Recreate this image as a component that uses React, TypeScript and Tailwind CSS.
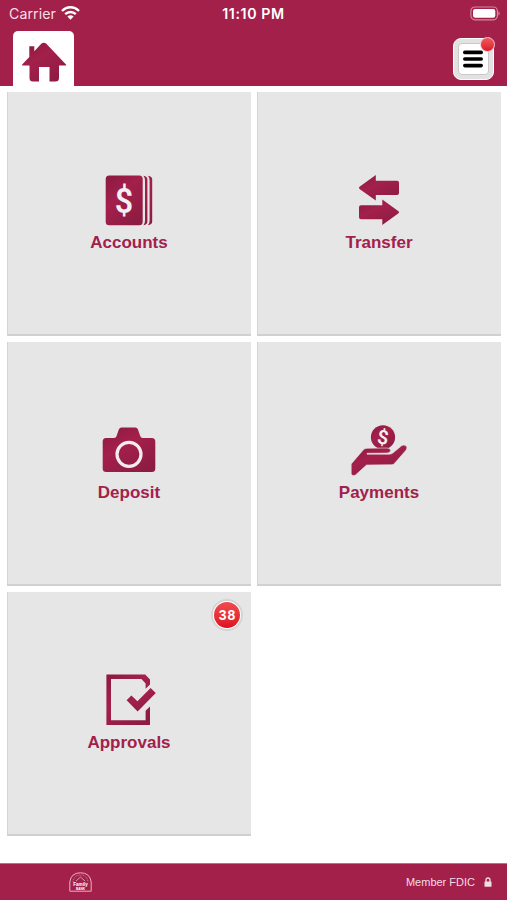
import React from 'react';

interface TileProps {
  label: string;
  badge?: number;
  children: React.ReactNode;
}

const Tile: React.FC<TileProps> = ({ label, badge, children }) => {
  return (
    <button className="relative flex h-[244px] flex-col items-center border-b-2 border-l border-b-[#d0d0d0] border-l-[#d4d4d4] bg-[#e6e6e6] pt-[79px] pr-px">
      <svg viewBox="0 0 60 60" className="h-[60px] w-[60px] shrink-0" fill="url(#brand)">
        {children}
      </svg>
      <span className="text-[17px] leading-6 font-bold text-[#a3204b]">{label}</span>
      {badge !== undefined && (
        <span className="absolute top-[7px] right-2 flex h-8 w-8 items-center justify-center rounded-full border-2 border-[#d4d4d4] bg-white">
          <span className="flex h-[26px] w-[26px] items-center justify-center rounded-full bg-linear-to-b from-[#ef4a50] to-[#de0a20] pl-px text-[14px] font-bold tracking-[1px] text-white">
            {badge}
          </span>
        </span>
      )}
    </button>
  );
};

const StatusBar: React.FC = () => {
  return (
    <div className="flex h-7 items-center justify-between pr-[6px] pl-[9px] font-['Inter',sans-serif] text-white">
      <div className="flex w-24 items-center gap-[5px]">
        <span className="text-[14.2px] tracking-[0.05px] text-[#f8dfe7]">Carrier</span>
        <svg viewBox="0 0 19 14" className="-mt-px h-[14px] w-[19px]" fill="none" stroke="white" strokeWidth="2.4">
          <path d="M1 5 C6 0 13 0 18 5" />
          <path d="M4.2 8.2 C7.2 5.3 11.8 5.3 14.8 8.2" />
          <path d="M6.4 10.6 Q9.5 7.9 12.6 10.6 L9.5 13.7Z" fill="white" stroke="none" />
        </svg>
      </div>
      <span className="-ml-[3px] text-[14.2px] font-semibold tracking-[0.6px]">11:10 PM</span>
      <div className="flex w-24 justify-end">
        <svg viewBox="0 0 31 15" className="-mt-[2px] h-[15px] w-[31px]">
          <rect x="0.9" y="1" width="26.5" height="12.8" rx="4" fill="none" stroke="#cf87a0" strokeWidth="1.2" />
          <rect x="3" y="3" width="22.3" height="8.8" rx="2.2" fill="white" />
          <path d="M28.5 5 Q30.8 7.4 28.5 9.8Z" fill="#d99ab0" />
        </svg>
      </div>
    </div>
  );
};

const Header: React.FC = () => {
  return (
    <header className="h-[86px] shrink-0 bg-[#a3204b]">
      <StatusBar />
      <div className="flex justify-between pt-[3px] pr-[13px] pl-[13px]">
        <button className="flex h-[55px] w-[61px] justify-center rounded-t-[5px] bg-white pt-[11px]">
          <svg viewBox="0 0 46 40" className="h-10 w-[46px]" fill="url(#brand)">
            <path d="M20.5 1.6 Q22.8 0 25.1 1.6 L45 22.5 Q45.8 23.5 44.5 23.5 L38 23.5 L38 36 Q38 39.5 34.5 39.5 L28.5 39.5 L28.5 25 L18 25 L18 39.5 L12 39.5 Q8.5 39.5 8.5 36 L8.5 23.5 L1.8 23.5 Q0.4 23.5 1.2 22.5 L8.3 15 L8.3 4.3 L13.3 4.3 L13.3 9.2Z" />
          </svg>
        </button>
        <button className="relative mt-[7px] h-[42px] w-[41px] rounded-[8px] border border-white bg-[#e4e1e2] p-[4px]">
          <span className="flex h-full w-full flex-col items-center justify-center rounded-[4px] border border-[#c9c9c9] bg-white">
            <svg viewBox="0 0 20 18" className="-ml-px h-[18px] w-5" stroke="black" strokeWidth="3.6" strokeLinecap="round">
              <path d="M1.8 2.4 H18.2 M1.8 9 H18.2 M1.8 15.6 H18.2" />
            </svg>
          </span>
          <span className="absolute -top-[2px] -right-[2px] h-[15px] w-[15px] rounded-full border border-[#f3c5cc] bg-linear-to-b from-[#f0565c] to-[#dc1428]" />
        </button>
      </div>
    </header>
  );
};

const Footer: React.FC = () => {
  return (
    <footer className="flex h-[37px] shrink-0 items-center justify-between border-t border-[#c56a87] bg-[#a3204b] pr-[15px] pl-[69px] text-[#f3dde4]">
      <svg viewBox="0 0 23 20" className="h-5 w-[23px]" fill="none" stroke="#e5b3c3">
        <path d="M0.8 19.2 L0.8 10 Q2 0.8 11.5 0.8 Q21 0.8 22.2 10 L22.2 19.2Z" strokeWidth="1" />
        <path d="M4 10 Q5 3 11.5 3 Q18 3 19 10" strokeWidth="0.6" strokeDasharray="1 0.7" />
        <path d="M7 9 L11.5 5 L16 9" strokeWidth="0.8" />
        <text x="11.5" y="13.5" textAnchor="middle" fontSize="4.6" fontWeight="700" fill="white" stroke="none">Family</text>
        <text x="11.5" y="17.6" textAnchor="middle" fontSize="3.2" fontWeight="700" fill="white" stroke="none">BANK</text>
      </svg>
      <div className="flex items-center gap-[9px]">
        <span className="text-[11px]">Member FDIC</span>
        <svg viewBox="0 0 8 10" className="h-[10px] w-2">
          <path d="M2 5 L2 3 Q2 1 4 1 Q6 1 6 3 L6 5" fill="none" stroke="#f3dde4" strokeWidth="1.3" />
          <rect x="0.5" y="4.5" width="7" height="5.3" rx="0.6" fill="#f3dde4" />
        </svg>
      </div>
    </footer>
  );
};

const App: React.FC = () => {
  return (
    <div className="flex h-[900px] w-[507px] flex-col bg-white font-['Liberation_Sans',Arial,sans-serif]">
      {/* Shared gradient for every brand-coloured icon */}
      <svg className="absolute h-0 w-0" aria-hidden="true">
        <defs>
          <linearGradient id="brand" x1="0" y1="0" x2="0.7" y2="1">
            <stop offset="0" stopColor="#8a1a40" />
            <stop offset="0.45" stopColor="#a3204b" />
            <stop offset="1" stopColor="#8e1c42" />
          </linearGradient>
        </defs>
      </svg>

      <Header />

      <main className="grid flex-1 auto-rows-[244px] grid-cols-[244px_244px] gap-[6px] pt-[6px] pl-[7px]">
        <Tile label="Accounts">
          <rect x="6.7" y="4.6" width="37" height="49.6" rx="3.5" />
          <path d="M44.4 4.8 Q48.4 5.2 48.4 8.5 L48.4 50.5 Q48.4 53.7 44.4 54.2 Q46 52.5 46 49.5 L46 9 Q46 6.5 44.4 4.8Z" />
          <path d="M48.9 4.8 Q53.2 5.2 53.2 8.5 L53.2 50.5 Q53.2 53.7 48.9 54.2 Q50.6 52.5 50.6 49.5 L50.6 9 Q50.6 6.5 48.9 4.8Z" />
          <text x="25" y="42" textAnchor="middle" fontSize="35" fontWeight="600" fill="#f3f0f1" className="font-['Roboto',sans-serif]" transform="translate(2 0) scale(0.92 1)">$</text>
        </Tile>
        <Tile label="Transfer">
          <path d="M10.5 15.7 L26.8 4 L26.8 9.8 L48 9.8 Q50 9.8 50 11.8 L50 22 Q50 24 48 24 L26.8 24 L26.8 29.6 L10.5 18 Q9.4 16.8 10.5 15.7Z" />
          <path d="M49.5 40.3 L33.3 28.4 L33.3 34.2 L12 34.2 Q10 34.2 10 36.2 L10 46.2 Q10 48.2 12 48.2 L33.3 48.2 L33.3 54 L49.5 42.3 Q50.6 41.3 49.5 40.3Z" />
        </Tile>
        <Tile label="Deposit">
          <path d="M7 17 L15 17 Q17 17 17.6 15 L19.8 8.5 Q20.6 6.5 22.6 6.5 L36.2 6.5 Q38.2 6.5 39 8.5 L41.2 15 Q41.8 17 43.8 17 L52.8 17 Q56.3 17 56.3 20.5 L56.3 47.5 Q56.3 51 52.8 51 L7.2 51 Q3.7 51 3.7 47.5 L3.7 20.5 Q3.7 17 7 17Z" />
          <circle cx="30" cy="33.3" r="12" fill="none" stroke="#f3ecef" strokeWidth="3.2" />
        </Tile>
        <Tile label="Payments">
          <circle cx="34" cy="16.3" r="12.1" />
          <text x="34" y="23" textAnchor="middle" fontSize="19.5" fontWeight="600" fill="#f3f0f1" className="font-['Roboto',sans-serif]" transform="rotate(8 34 16.3)">$</text>
          <path stroke="#e6e6e6" strokeWidth="0.6" d="M2.2 52.5 L2.2 43 L14.4 28.8 Q15.6 27.5 18 27.3 L38 27 Q41.5 27 41.5 29.6 Q41.3 32 38 32.1 L18 32.3 L18 33.2 L40.5 33.2 Q42.8 33.2 44.5 31.5 L52.5 24.8 Q54.5 23.4 56.7 24.6 Q58.8 26.5 57.2 29 L46 41.8 Q44.8 43.6 42.8 43.7 L17.5 44 L6.5 54 Q2.8 55.5 2.2 52.5Z" />
        </Tile>
        <Tile label="Approvals" badge={38}>
          <path d="M7.4 3.4 L46.2 3.4 L51 8.4 L51 13.5 L46.6 17.8 L46.6 12.4 L42.4 8 L12 8 L12 49.2 L46.6 49.2 L46.6 39.8 L51 35.4 L51 54 L7.4 54Z" />
          <path d="M27.6 29.3 L32.4 24.6 L38.4 30.2 L51.6 17 L56.8 22 L38.6 40.6Z" />
        </Tile>
      </main>

      <Footer />
    </div>
  );
};

export default App;
